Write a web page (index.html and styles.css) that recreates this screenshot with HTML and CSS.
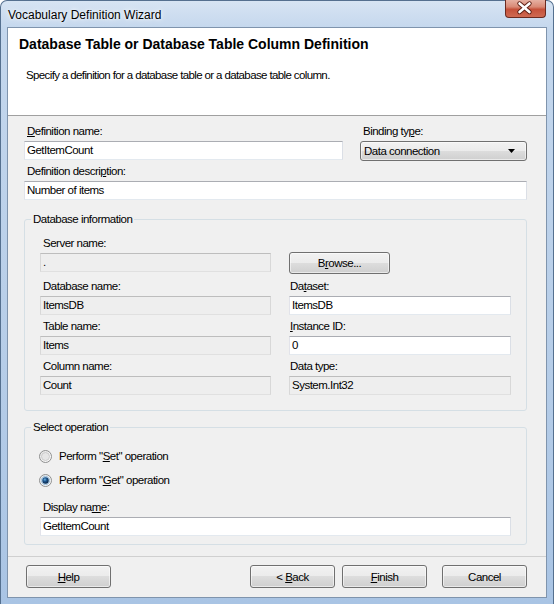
FILE: index.html
```html
<!DOCTYPE html>
<html>
<head>
<meta charset="utf-8">
<link rel="stylesheet" href="styles.css">
</head>
<body>
<div class="window">
  <div class="titlebar">
    <span class="title">Vocabulary Definition Wizard</span>
    <div class="close">
      <svg width="41" height="18" viewBox="0 0 41 18">
        <path d="M15.5 4.5 L25.5 13 M25.5 4.5 L15.5 13" stroke="#5a1d12" stroke-width="4.4" stroke-linecap="round" fill="none"/>
        <path d="M15.5 4.5 L25.5 13 M25.5 4.5 L15.5 13" stroke="#ffffff" stroke-width="2.6" stroke-linecap="round" fill="none"/>
      </svg>
    </div>
  </div>
  <div class="client">
    <div class="header">
      <div class="h-title">Database Table or Database Table Column Definition</div>
      <div class="h-sub">Specify a definition for a database table or a database table column.</div>
    </div>
    <div class="form">
      <div class="top">
        <div class="field">
          <div class="lbl"><u>D</u>efinition name:</div>
          <div class="input">GetItemCount</div>
        </div>
        <div class="field">
          <div class="lbl">Binding ty<u>p</u>e:</div>
          <div class="combo"><span>Data connection</span>
            <svg width="7" height="4" viewBox="0 0 7 4"><path d="M0 0 H7 L3.5 4 Z" fill="#000"/></svg>
          </div>
        </div>
        <div class="field span2">
          <div class="lbl">Definition descri<u>p</u>tion:</div>
          <div class="input">Number of items</div>
        </div>
      </div>

      <fieldset class="group g1">
        <legend>Database information</legend>
        <div class="grid2">
          <div class="field">
            <div class="lbl">Server name:</div>
            <div class="input ro">.</div>
          </div>
          <div class="browse-cell">
            <div class="btn browse">B<u>r</u>owse...</div>
          </div>
          <div class="field">
            <div class="lbl">Database name:</div>
            <div class="input ro">ItemsDB</div>
          </div>
          <div class="field">
            <div class="lbl r">Da<u>t</u>aset:</div>
            <div class="input">ItemsDB</div>
          </div>
          <div class="field">
            <div class="lbl">Table name:</div>
            <div class="input ro">Items</div>
          </div>
          <div class="field">
            <div class="lbl r"><u>I</u>nstance ID:</div>
            <div class="input">0</div>
          </div>
          <div class="field">
            <div class="lbl">Column name:</div>
            <div class="input ro">Count</div>
          </div>
          <div class="field">
            <div class="lbl r">Data type:</div>
            <div class="input ro">System.Int32</div>
          </div>
        </div>
      </fieldset>

      <fieldset class="group g2">
        <legend>Select operation</legend>
        <div class="radio">
          <svg width="13" height="13" viewBox="0 0 13 13">
            <defs>
              <linearGradient id="rg1" x1="0" y1="0" x2="1" y2="1">
                <stop offset="0" stop-color="#e4e4e4"/>
                <stop offset="1" stop-color="#ffffff"/>
              </linearGradient>
            </defs>
            <circle cx="6.5" cy="6.5" r="6" fill="url(#rg1)" stroke="#8e8f8f" stroke-width="1"/>
            <circle cx="6.5" cy="6.5" r="4" fill="#e6e6e6" stroke="#c4c4c4" stroke-width="0.8"/>
          </svg>
          <span>Perform "<u>S</u>et" operation</span>
        </div>
        <div class="radio">
          <svg width="13" height="13" viewBox="0 0 13 13">
            <defs>
              <linearGradient id="rg2" x1="0" y1="0" x2="1" y2="1">
                <stop offset="0" stop-color="#e4e4e4"/>
                <stop offset="1" stop-color="#ffffff"/>
              </linearGradient>
              <radialGradient id="dot" cx="0.4" cy="0.35" r="0.7">
                <stop offset="0" stop-color="#6fb6e0"/>
                <stop offset="0.4" stop-color="#1d5690"/>
                <stop offset="1" stop-color="#0a2240"/>
              </radialGradient>
            </defs>
            <circle cx="6.5" cy="6.5" r="6" fill="url(#rg2)" stroke="#8e8f8f" stroke-width="1"/>
            <circle cx="6.5" cy="6.5" r="4.2" fill="#c6def0" stroke="#93b9d8" stroke-width="0.8"/>
            <circle cx="6.5" cy="6.5" r="3.2" fill="url(#dot)"/>
          </svg>
          <span>Perform "<u>G</u>et" operation</span>
        </div>
        <div class="field dn">
          <div class="lbl">Display na<u>m</u>e:</div>
          <div class="input">GetItemCount</div>
        </div>
      </fieldset>
    </div>
    <div class="sep"></div>
    <div class="buttons">
      <div class="btn"><u>H</u>elp</div>
      <div class="spacer"></div>
      <div class="btn">&lt;&nbsp;<u>B</u>ack</div>
      <div class="btn finish"><u>F</u>inish</div>
      <div class="btn cancel">Cancel</div>
    </div>
  </div>
</div>
</body>
</html>
```

FILE: styles.css
```css
html, body {
  margin: 0;
  padding: 0;
  background: #ffffff;
}

body {
  font-family: "Liberation Sans", Arial, sans-serif;
  color: #000;
}

.window {
  position: relative;
  width: 554px;
  height: 604px;
  box-sizing: border-box;
  display: flex;
  flex-direction: column;
  background: linear-gradient(180deg, #d7e4f3 0px, #c4d7ed 28px, #b6cde8 60%, #a9c4e4 100%);
  border: 1px solid #55708f;
  border-bottom: none;
  border-radius: 7px 7px 0 0;
}

.titlebar {
  height: 27px;
  padding-left: 7px;
  display: flex;
  align-items: center;
  font-size: 12px;
}

.title {
  text-shadow: 0 0 6px rgba(255, 255, 255, 0.95), 0 0 3px rgba(255, 255, 255, 0.9);
}

.close {
  position: absolute;
  top: -1px;
  right: 7px;
  width: 41px;
  height: 18px;
  box-sizing: border-box;
  border: 1px solid #6b2a1f;
  border-top: none;
  border-radius: 0 0 4px 4px;
  background: linear-gradient(180deg, #e6b0a2 0%, #d98a76 40%, #c5513a 55%, #cf6a52 100%);
  display: flex;
  align-items: center;
  justify-content: center;
}

.close svg {
  display: block;
  margin-left: -2px;
  margin-top: -1px;
}

.client {
  margin: 0 7px;
  height: 569px;
  background: #f0f0f0;
  display: flex;
  flex-direction: column;
  box-shadow: 0 0 0 1px #7f94ad;
  font-size: 11.5px;
  letter-spacing: -0.5px;
}

.header {
  height: 88px;
  box-sizing: border-box;
  background: #ffffff;
  border-bottom: 1px solid #a0a0a0;
  padding: 7px 0 0 11px;
}

.h-title {
  font-weight: bold;
  font-size: 14px;
  line-height: 18px;
  letter-spacing: 0;
}

.h-sub {
  margin: 14px 0 0 7px;
  line-height: 16px;
  letter-spacing: -0.62px;
}

.form {
  padding: 7px 19px 0 16px;
}

.top {
  display: grid;
  grid-template-columns: 319px 167px;
  column-gap: 17px;
  row-gap: 2px;
}

.span2 {
  grid-column: 1 / span 2;
}

.lbl {
  height: 16px;
  line-height: 16px;
  margin-bottom: 2px;
  padding-left: 3px;
  white-space: nowrap;
}

.lbl.r {
  padding-left: 1px;
}

.input {
  height: 19px;
  box-sizing: border-box;
  border: 1px solid;
  border-color: #abadb3 #dbdfe6 #e3e9ef #e2e3ea;
  background: #ffffff;
  padding-left: 2px;
  line-height: 17px;
  white-space: nowrap;
  overflow: hidden;
}

.input.ro {
  background: #eeeeee;
  border-color: #bdbdbd #d8d8d8 #e0e0e0 #d8d8d8;
}

.combo {
  height: 20px;
  box-sizing: border-box;
  border: 1px solid #707070;
  border-radius: 3px;
  background: linear-gradient(180deg, #f2f2f2 0%, #ebebeb 50%, #dddddd 50%, #cfcfcf 100%);
  box-shadow: inset 0 0 0 1px rgba(255, 255, 255, 0.55);
  display: flex;
  align-items: center;
  justify-content: space-between;
  padding: 0 11px 0 3px;
}

.combo svg {
  display: block;
}

.group {
  margin: 11px 0 0;
  padding: 8px 15px 15px;
  border: 1px solid #d5dfe5;
  border-radius: 3px;
  min-width: 0;
}

.group legend {
  padding: 0 2px;
  margin-left: -9px;
  line-height: 16px;
}

.g2 {
  margin-top: 8px;
  padding: 13px 15px 8px;
}

.grid2 {
  display: grid;
  grid-template-columns: 231px 222px;
  column-gap: 18px;
  row-gap: 3px;
}

.browse-cell {
  padding-top: 17px;
}

.btn {
  width: 85px;
  height: 23px;
  box-sizing: border-box;
  border: 1px solid #707070;
  border-radius: 3px;
  background: linear-gradient(180deg, #f2f2f2 0%, #ebebeb 50%, #dddddd 50%, #cfcfcf 100%);
  box-shadow: inset 0 0 0 1px rgba(255, 255, 255, 0.55);
  display: flex;
  align-items: center;
  justify-content: center;
  white-space: nowrap;
}

.btn.browse {
  width: 101px;
  height: 22px;
  margin-bottom: 1px;
}

.radio {
  height: 16px;
  display: flex;
  align-items: center;
  gap: 7px;
  margin-left: -1px;
}

.radio svg {
  display: block;
  flex: none;
}

.radio + .radio {
  margin-top: 8px;
}

.dn {
  margin-top: 11px;
}

.sep {
  margin-top: 11px;
  border-top: 1px solid #d0d0d0;
}

.buttons {
  display: flex;
  margin-top: 8px;
  padding: 0 19px 0 18px;
}

.spacer {
  flex: 1;
}

.finish {
  margin-left: 7px;
}

.cancel {
  margin-left: 15px;
}
```
